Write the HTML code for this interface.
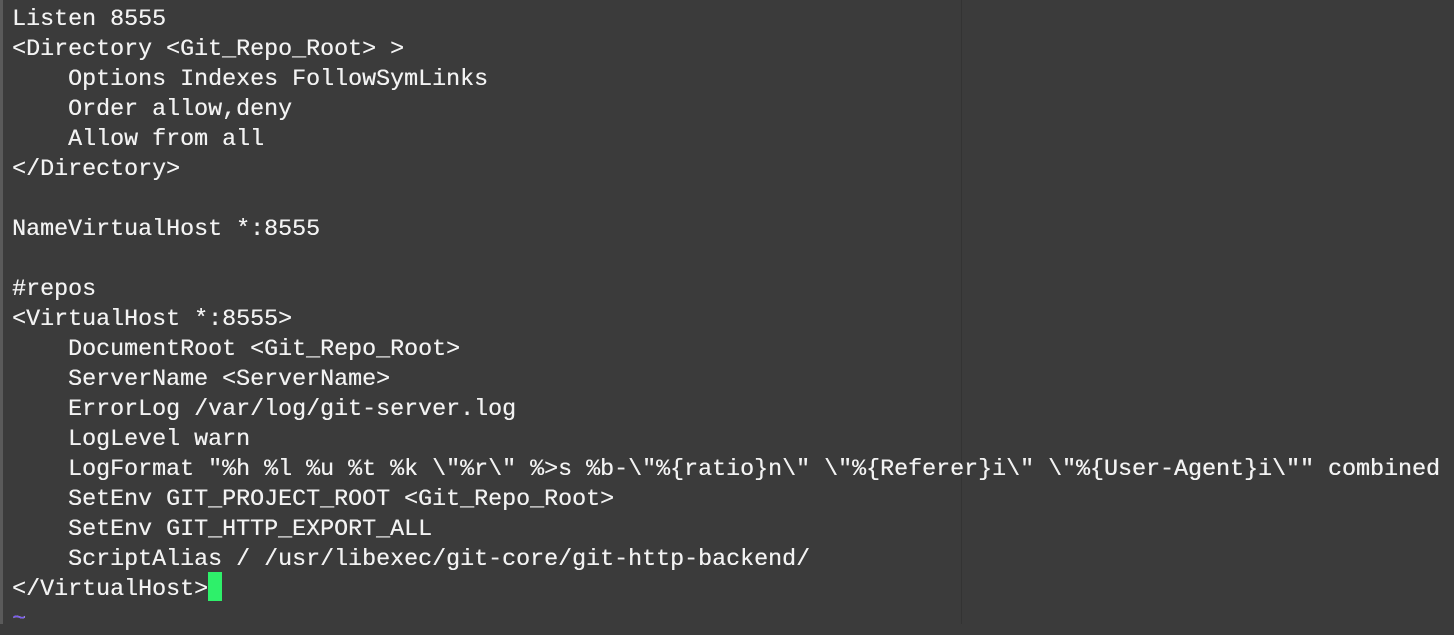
<!DOCTYPE html>
<html><head><style>
html,body{margin:0;padding:0;}
body{width:1454px;height:624px;background:#3b3b3b;position:relative;overflow:hidden;}
.lb{position:absolute;left:0;top:0;width:3px;height:624px;background:#5a5a5a;}
.vl{position:absolute;left:961px;top:0;width:1px;height:624px;background:#333;}
pre{position:absolute;left:12px;top:5px;margin:0;font-family:"Liberation Mono",monospace;font-size:23.33px;line-height:30px;color:#f2f2f2;white-space:pre;text-shadow:0.3px 0 0 #f2f2f2;}
.cur{position:absolute;left:208px;top:572px;width:14px;height:29px;background:#2ef06a;}
.t{color:#7a5cf0;}
</style></head><body>
<div class="lb"></div><div class="vl"></div>
<pre>Listen 8555
&lt;Directory &lt;Git_Repo_Root&gt; &gt;
    Options Indexes FollowSymLinks
    Order allow,deny
    Allow from all
&lt;/Directory&gt;

NameVirtualHost *:8555

#repos
&lt;VirtualHost *:8555&gt;
    DocumentRoot &lt;Git_Repo_Root&gt;
    ServerName &lt;ServerName&gt;
    ErrorLog /var/log/git-server.log
    LogLevel warn
    LogFormat "%h %l %u %t %k \"%r\" %&gt;s %b-\"%{ratio}n\" \"%{Referer}i\" \"%{User-Agent}i\"" combined
    SetEnv GIT_PROJECT_ROOT &lt;Git_Repo_Root&gt;
    SetEnv GIT_HTTP_EXPORT_ALL
    ScriptAlias / /usr/libexec/git-core/git-http-backend/
&lt;/VirtualHost&gt;
<span class="t">~</span></pre>
<div class="cur"></div>
</body></html>
